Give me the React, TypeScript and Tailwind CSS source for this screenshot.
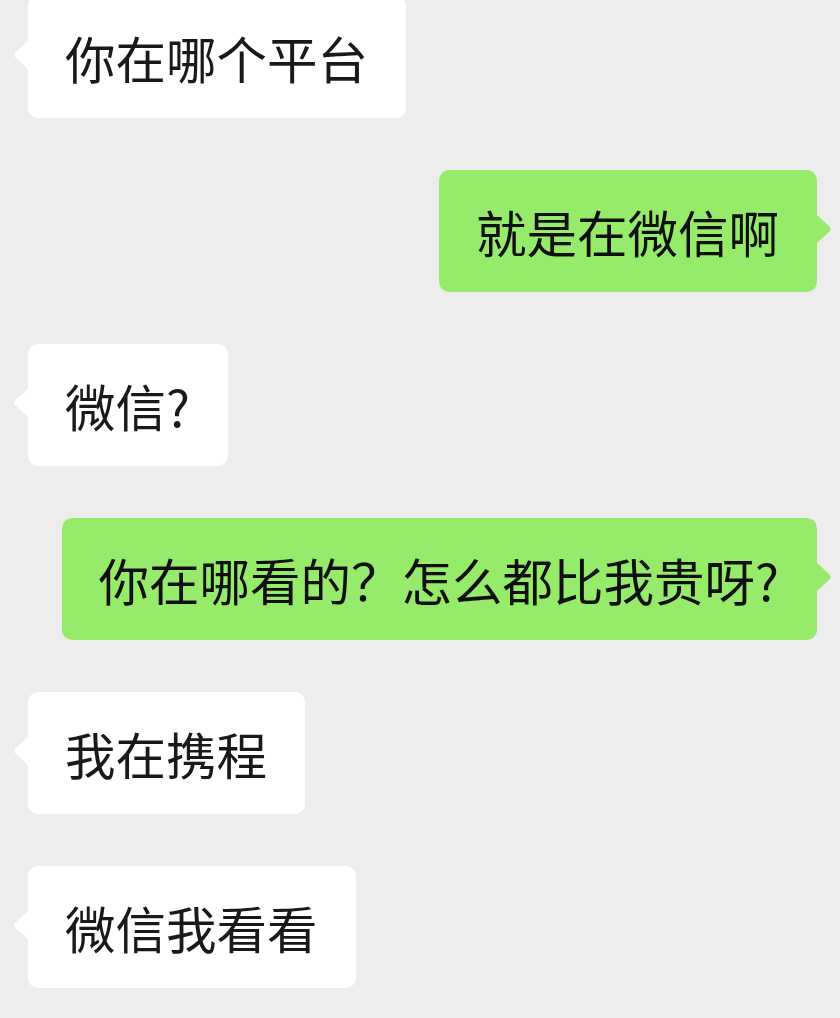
import React from "react";

function LeftTail() {
  return (
    <svg
      className="absolute left-[-15px] top-[44px]"
      width="16"
      height="30"
      viewBox="0 0 16 30"
    >
      <path d="M16 0 L2.5 12.5 Q0 15 2.5 17.5 L16 30 Z" fill="#ffffff" />
    </svg>
  );
}

function RightTail() {
  return (
    <svg
      className="absolute right-[-15px] top-[44px]"
      width="16"
      height="30"
      viewBox="0 0 16 30"
    >
      <path d="M0 0 L13.5 12.5 Q16 15 13.5 17.5 L0 30 Z" fill="#97eb6b" />
    </svg>
  );
}

function Left({ text }: { text: string }) {
  return (
    <div className="relative self-start ml-[28px] h-[122px] flex items-center pl-[37px] pr-[38px] bg-white rounded-[10px] text-[50.5px] leading-none text-[#191919] whitespace-nowrap">
      <LeftTail />
      <span>{text}</span>
    </div>
  );
}

function Right({ text }: { text: string }) {
  return (
    <div className="relative self-end mr-[23px] h-[122px] flex items-center pl-[37px] pr-[38px] bg-[#97eb6b] rounded-[10px] text-[50.5px] leading-none text-[#0f0f0f] whitespace-nowrap">
      <RightTail />
      <span>{text}</span>
    </div>
  );
}

export default function App() {
  return (
    <div className="w-[840px] h-[1018px] overflow-hidden bg-[#ededed] font-['Noto_Sans_CJK_SC','Noto_Sans',sans-serif]">
      <div className="flex flex-col gap-[52px] mt-[-4px]">
        <Left text="你在哪个平台" />
        <Right text="就是在微信啊" />
        <Left text="微信?" />
        <Right text="你在哪看的？怎么都比我贵呀?" />
        <Left text="我在携程" />
        <Left text="微信我看看" />
      </div>
    </div>
  );
}
